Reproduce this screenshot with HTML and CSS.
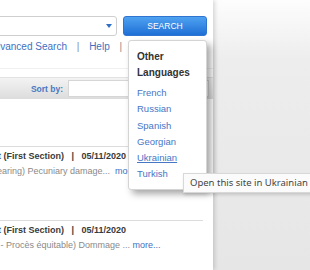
FILE: index.html
```html
<!DOCTYPE html>
<html lang="en">
<head>
    <meta charset="UTF-8">
    <meta name="viewport" content="width=device-width, initial-scale=1.0">
    <title>Case-law search</title>
    <link rel="stylesheet" href="styles.css">
</head>
<body>
    <div class="page">
        <div class="search-row">
            <div class="search-box">
                <span class="arrow"></span>
            </div>
            <button type="button" class="btn-search">SEARCH</button>
        </div>
        <div class="nav-links">
            <a href="#" class="link">Advanced Search</a>
            <span class="sep">|</span>
            <a href="#" class="link">Help</a>
            <span class="sep">|</span>
        </div>
        <div class="sort-bar">
            <span class="sort-label">Sort by:</span>
            <div class="sort-input"></div>
        </div>
        <div class="results">
            <div class="result">
                <div class="result-title">Court (First Section) <span class="sep-dark">|</span> 05/11/2020</div>
                <div class="result-desc desc-a">(Fair hearing) Pecuniary damage...&nbsp; <a href="#" class="link">more...</a></div>
            </div>
            <div class="result">
                <div class="result-title">Court (First Section) <span class="sep-dark">|</span> 05/11/2020</div>
                <div class="result-desc desc-b">6-1 - Procès équitable) Dommage ... <a href="#" class="link">more...</a></div>
            </div>
        </div>
    </div>

    <div class="lang-menu">
        <div class="lang-title">Other<br>Languages</div>
        <a href="#" class="lang-link">French</a>
        <a href="#" class="lang-link">Russian</a>
        <a href="#" class="lang-link">Spanish</a>
        <a href="#" class="lang-link">Georgian</a>
        <a href="#" class="lang-link hover">Ukrainian</a>
        <a href="#" class="lang-link">Turkish</a>
    </div>
    <div class="tooltip">Open this site in Ukrainian</div>
</body>
</html>
```

FILE: styles.css
```css
body {
    margin: 0;
    padding: 0;
    font-family: "Liberation Sans", Arial, sans-serif;
    background: linear-gradient(#fdfdfd 0, #ededed 60px, #e6e6e6 270px);
    height: 100vh;
    overflow: hidden;
}
.page {
    margin-left: -12px;
    width: 225px;
    height: 100vh;
    background-color: white;
    box-shadow: 2px 0 4px rgba(0, 0, 0, 0.14);
    padding-top: 16px;
    box-sizing: border-box;
    overflow: hidden;
}
.search-row {
    display: flex;
    gap: 6px;
    height: 20px;
}
.search-box {
    width: 129px;
    box-sizing: border-box;
    border: 1px solid #cfcfcf;
    border-radius: 3px;
    background-color: white;
    display: flex;
    align-items: center;
    justify-content: flex-end;
    padding-right: 4px;
}
.arrow {
    width: 0;
    height: 0;
    border-left: 3.5px solid transparent;
    border-right: 3.5px solid transparent;
    border-top: 4px solid #2f6fc4;
}
.btn-search {
    width: 84px;
    height: 20px;
    padding: 0;
    border: 1px solid #2f74cf;
    border-radius: 3px;
    background: linear-gradient(#4fa2f1, #1e6fd6);
    color: white;
    font-family: "Liberation Sans", Arial, sans-serif;
    font-size: 8.5px;
    cursor: pointer;
}
.nav-links {
    margin-top: 4px;
    font-size: 10px;
    line-height: 14px;
    padding-bottom: 14px;
    border-bottom: 1px solid #f0f0f0;
    white-space: nowrap;
}
.link {
    color: #3f70c2;
    text-decoration: none;
}
.sep {
    color: #8a8a8a;
    margin: 0 7px;
}
.sort-bar {
    margin-top: 8px;
    height: 22px;
    display: flex;
    align-items: center;
    gap: 5px;
    background: linear-gradient(#f3f3f3, #dcdcdc);
    border-top: 1px solid #e2e2e2;
    box-sizing: border-box;
}
.sort-label {
    width: 75px;
    text-align: right;
    font-size: 8.5px;
    font-weight: bold;
    color: #4a78c2;
}
.sort-input {
    flex: 1;
    height: 17px;
    margin-right: 4px;
    background-color: white;
    border: 1px solid #d6d6d6;
    box-sizing: border-box;
}
.results {
    margin-top: 47px;
}
.result {
    width: 215px;
    border-top: 1px solid #dcdcdc;
    padding: 2px 0 42px;
    overflow: hidden;
    white-space: nowrap;
}
.result:last-child {
    padding-bottom: 4px;
}
.result-title {
    margin-left: -11px;
    font-size: 9px;
    font-weight: bold;
    line-height: 14px;
    color: #3a3a3a;
}
.sep-dark {
    margin: 0 5px;
}
.result-desc {
    margin-top: 1px;
    font-size: 9px;
    line-height: 14px;
    color: #8a8a8a;
}
.desc-a {
    margin-left: -17px;
}
.desc-b {
    margin-left: -3px;
}
.lang-menu {
    position: absolute;
    left: 128px;
    top: 40px;
    width: 79px;
    height: 150px;
    box-sizing: border-box;
    background-color: white;
    border: 1px solid #d4d4d4;
    border-radius: 3px;
    box-shadow: 4px 4px 7px rgba(0, 0, 0, 0.35);
    padding: 8px 0 0 8px;
}
.lang-title {
    font-size: 10px;
    font-weight: bold;
    line-height: 16px;
    color: #333;
    margin-bottom: 4px;
}
.lang-link {
    display: block;
    font-size: 9.5px;
    line-height: 16.3px;
    color: #4776c6;
    text-decoration: none;
}
.lang-link.hover {
    text-decoration: underline;
}
.tooltip {
    position: absolute;
    left: 183px;
    top: 173px;
    height: 20px;
    padding: 0 6px;
    box-sizing: border-box;
    background-color: #fbfbfb;
    border: 1px solid #d8d8d8;
    box-shadow: 1px 2px 3px rgba(0, 0, 0, 0.15);
    font-family: "Noto Sans", "DejaVu Sans", sans-serif;
    font-size: 9.5px;
    line-height: 18px;
    color: #444;
    white-space: nowrap;
}
```
